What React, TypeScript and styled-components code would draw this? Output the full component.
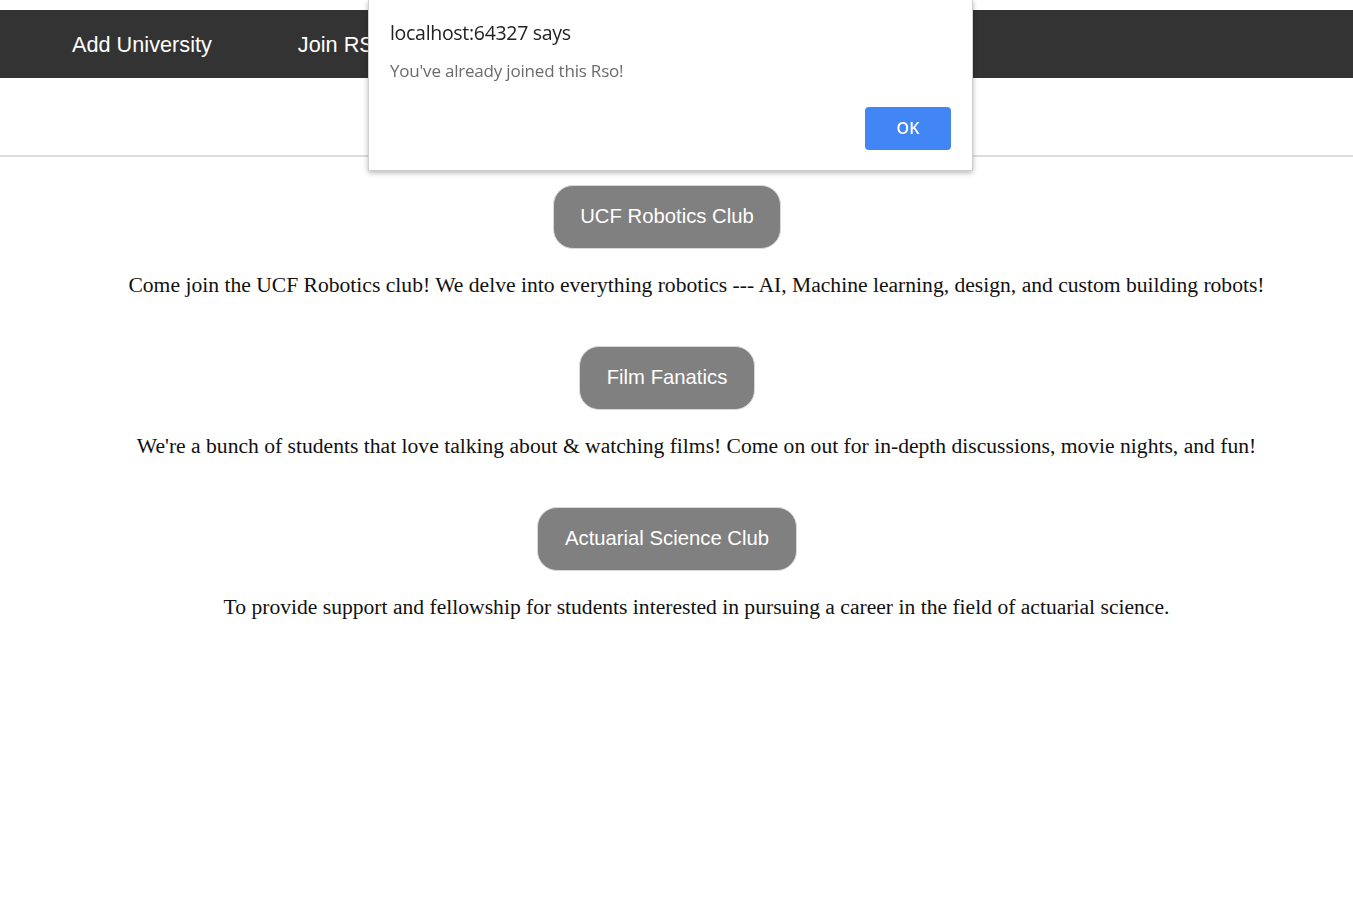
import React from "react";
import styled, { createGlobalStyle } from "styled-components";

const Global = createGlobalStyle`
  html, body { margin: 0; padding: 0; background: #fff; }
  body { font-family: "Liberation Serif", "Times New Roman", serif; }
`;

const Page = styled.div`
  padding-top: 10px;
`;

const NavBar = styled.nav`
  display: flex;
  align-items: center;
  box-sizing: border-box;
  height: 68px;
  background: #333333;
  padding: 2px 0 0 72px;
  gap: 86px;
`;

const NavLink = styled.a`
  font-family: "Liberation Sans", Arial, sans-serif;
  font-size: 21.7px;
  color: #ffffff;
  text-decoration: none;
  white-space: nowrap;
`;

const Header = styled.div`
  height: 77px;
  border-bottom: 2px solid #dcdcdc;
`;

const List = styled.main`
  display: flex;
  flex-direction: column;
  padding-top: 28px;
`;

const Item = styled.section`
  display: flex;
  flex-direction: column;
  height: 161px;
`;

const ButtonRow = styled.div`
  display: flex;
  justify-content: center;
  padding-right: 19px;
`;

const ClubButton = styled.button`
  font-family: "Liberation Sans", Arial, sans-serif;
  font-size: 20.3px;
  line-height: 23px;
  color: #ffffff;
  background: #808080;
  border: 1px solid #d8d8d8;
  border-radius: 20px;
  padding: 18.5px 26.5px 20.5px;
  cursor: pointer;
`;

const Description = styled.p`
  margin: 24px 0 0;
  padding-left: 40px;
  font-family: "Liberation Serif", "Times New Roman", serif;
  font-size: 21.6px;
  line-height: 24px;
  color: #111;
  text-align: center;
  white-space: nowrap;
`;

const Dialog = styled.div`
  position: fixed;
  top: 0;
  left: 368px;
  width: 605px;
  height: 171px;
  box-sizing: border-box;
  background: #fff;
  border: 1px solid #d0d0d0;
  border-top: none;
  box-shadow: 0 2px 5px rgba(0, 0, 0, 0.28);
  padding: 20px 21px 20px 21px;
  display: flex;
  flex-direction: column;
`;

const DialogTitle = styled.div`
  font-family: "Open Sans", "Noto Sans", sans-serif;
  font-size: 19.5px;
  line-height: 26px;
  color: #222;
  letter-spacing: -0.3px;
`;

const DialogMessage = styled.div`
  margin-top: 14px;
  font-family: "Open Sans", "Noto Sans", sans-serif;
  font-size: 17px;
  line-height: 22px;
  color: #6b6b6b;
  letter-spacing: -0.2px;
`;

const DialogActions = styled.div`
  margin-top: auto;
  display: flex;
  justify-content: flex-end;
`;

const OkButton = styled.button`
  width: 86px;
  height: 43px;
  border: none;
  border-radius: 4px;
  background: #4285f4;
  color: #fff;
  font-family: "Open Sans", "Noto Sans", sans-serif;
  font-size: 16px;
  font-weight: 600;
  padding: 0 0 2px;
`;

const clubs = [
  {
    name: "UCF Robotics Club",
    desc: "Come join the UCF Robotics club! We delve into everything robotics --- AI, Machine learning, design, and custom building robots!",
  },
  {
    name: "Film Fanatics",
    desc: "We're a bunch of students that love talking about & watching films! Come on out for in-depth discussions, movie nights, and fun!",
  },
  {
    name: "Actuarial Science Club",
    desc: "To provide support and fellowship for students interested in pursuing a career in the field of actuarial science.",
  },
];

export default function App() {
  return (
    <Page>
      <Global />
      <NavBar>
        <NavLink href="#">Add University</NavLink>
        <NavLink href="#">Join RSO</NavLink>
      </NavBar>
      <Header />
      <List>
        {clubs.map((c) => (
          <Item key={c.name}>
            <ButtonRow>
              <ClubButton>{c.name}</ClubButton>
            </ButtonRow>
            <Description>{c.desc}</Description>
          </Item>
        ))}
      </List>
      <Dialog role="alertdialog">
        <DialogTitle>localhost:64327 says</DialogTitle>
        <DialogMessage>You've already joined this Rso!</DialogMessage>
        <DialogActions>
          <OkButton>OK</OkButton>
        </DialogActions>
      </Dialog>
    </Page>
  );
}
